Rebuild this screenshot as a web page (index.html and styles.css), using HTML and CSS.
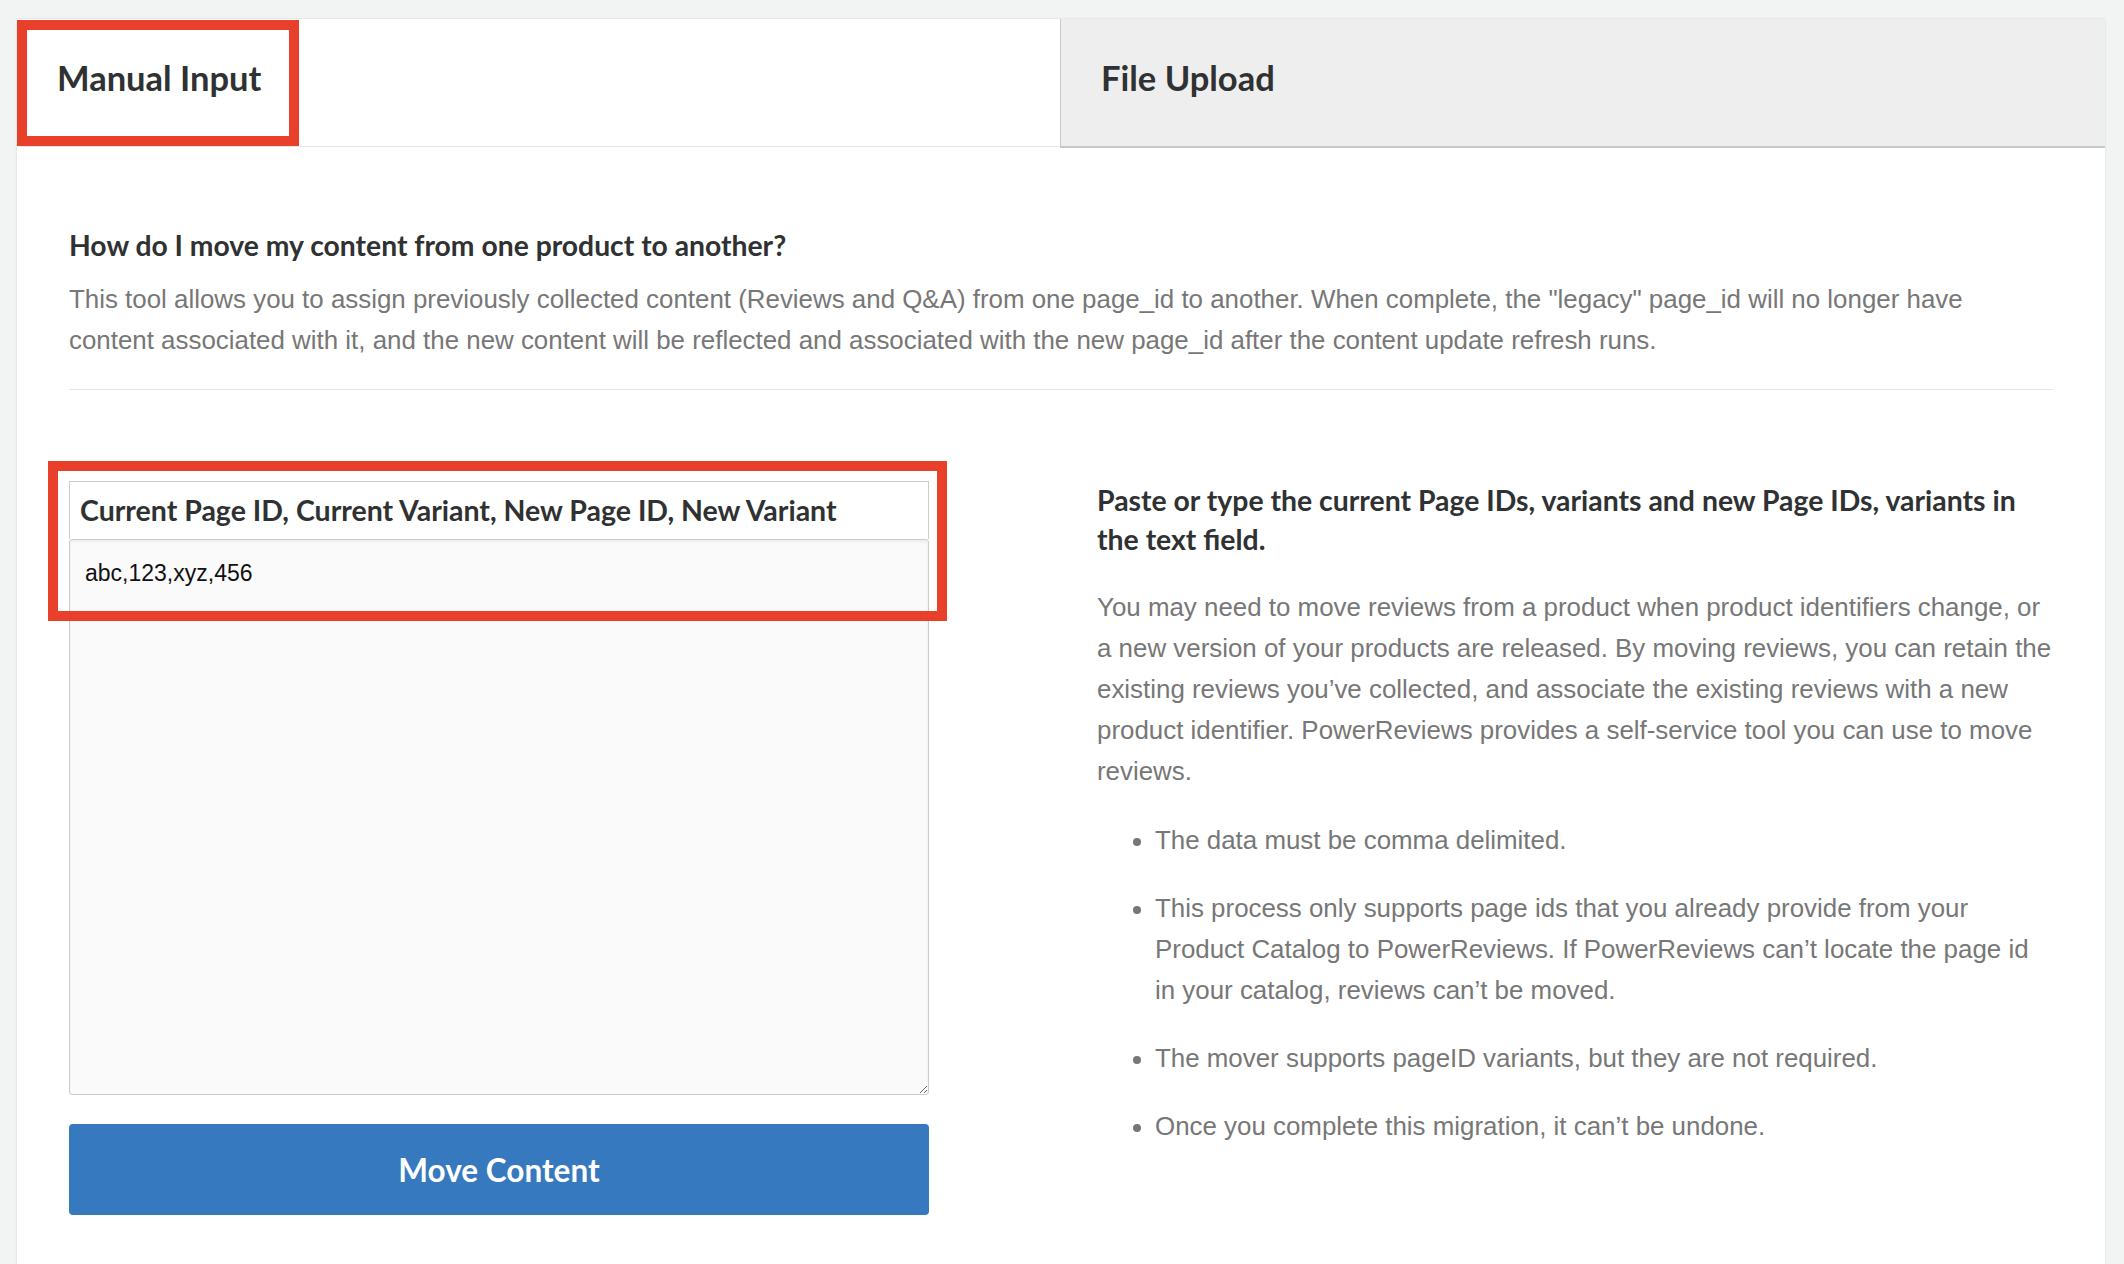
FILE: index.html
```html
<!DOCTYPE html>
<html lang="en">
<head>
<meta charset="utf-8">
<title>Move Content</title>
<link rel="stylesheet" href="styles.css">
</head>
<body>
<div class="page">
  <div class="card">
    <div class="tabs">
      <div class="tab tab-active">Manual Input</div>
      <div class="tab tab-inactive">File Upload</div>
    </div>
    <div class="content">
      <section class="intro">
        <h2 class="intro-title">How do I move my content from one product to another?</h2>
        <p class="text">This tool allows you to assign previously collected content (Reviews and Q&amp;A) from one page_id to another. When complete, the "legacy" page_id will no longer have content associated with it, and the new content will be reflected and associated with the new page_id after the content update refresh runs.</p>
      </section>
      <div class="columns">
        <div class="form-col">
          <div class="field-label">Current Page ID, Current Variant, New Page ID, New Variant</div>
          <textarea class="field-input" spellcheck="false">abc,123,xyz,456</textarea>
          <button class="btn-primary" type="button">Move Content</button>
        </div>
        <div class="help-col">
          <h3 class="help-title">Paste or type the current Page IDs, variants and new Page IDs, variants in the text field.</h3>
          <p class="text">You may need to move reviews from a product when product identifiers change, or a new version of your products are released. By moving reviews, you can retain the existing reviews you’ve collected, and associate the existing reviews with a new product identifier. PowerReviews provides a self-service tool you can use to move reviews.</p>
          <ul class="help-list">
            <li>The data must be comma delimited.</li>
            <li>This process only supports page ids that you already provide from your Product Catalog to PowerReviews. If PowerReviews can’t locate the page id in your catalog, reviews can’t be moved.</li>
            <li>The mover supports pageID variants, but they are not required.</li>
            <li>Once you complete this migration, it can’t be undone.</li>
          </ul>
        </div>
      </div>
    </div>
  </div>
</div>
<div class="mark mark-tab"></div>
<div class="mark mark-field"></div>
</body>
</html>
```

FILE: styles.css
```css
html, body {
  margin: 0;
  padding: 0;
}
body {
  background: #f2f3f3;
  font-family: "Liberation Sans", Arial, sans-serif;
  overflow: hidden;
  height: 1264px;
}
.page {
  padding: 19px 19px 0 17px;
}
.card {
  background: #ffffff;
  box-shadow: 0 0 2px rgba(0, 0, 0, 0.12);
  min-height: 1300px;
}
.tabs {
  display: flex;
  height: 128px;
}
.tab {
  box-sizing: border-box;
  font-family: Lato, "Open Sans", sans-serif;
  font-weight: 700;
  font-size: 34.5px;
  line-height: 40px;
  color: #2f3132;
  padding-top: 39px;
}
.tab-active {
  width: 1043px;
  padding-left: 40px;
  background: #ffffff;
  border-bottom: 1px solid #e6e6e6;
}
.tab-inactive {
  flex: 1;
  padding-left: 40px;
  background: #eeeeee;
  border-left: 1px solid #c8c8c8;
  border-bottom: 2px solid #c8c8c8;
  height: 129px;
}
.content {
  padding: 78px 52px 0 52px;
}
.intro {
  border-bottom: 1px solid #e6e6e6;
  padding-bottom: 28px;
}
.intro-title {
  margin: 0 0 14px 0;
  font-family: Lato, "Open Sans", sans-serif;
  font-weight: 700;
  font-size: 28.3px;
  line-height: 40px;
  color: #2f3132;
}
.text {
  margin: 0;
  font-size: 25.9px;
  line-height: 41px;
  color: #777777;
}
.columns {
  display: grid;
  grid-template-columns: 860px 956px;
  column-gap: 168px;
  padding-top: 91px;
}
.form-col {
  display: flex;
  flex-direction: column;
}
.field-label {
  box-sizing: border-box;
  height: 58px;
  border: 1px solid #cccccc;
  border-bottom: none;
  padding-left: 10px;
  font-family: Lato, "Open Sans", sans-serif;
  font-weight: 700;
  font-size: 28.5px;
  line-height: 56px;
  color: #2f3132;
  white-space: nowrap;
}
.field-input {
  box-sizing: border-box;
  display: block;
  width: 860px;
  height: 556px;
  margin: 0;
  padding: 20px 15px;
  border: 1px solid #cccccc;
  border-radius: 3px;
  background: #fafafa;
  box-shadow: inset 0 2px 3px rgba(0, 0, 0, 0.06);
  font-family: "Liberation Sans", Arial, sans-serif;
  font-size: 23px;
  color: #111111;
  resize: vertical;
  outline: none;
}
.btn-primary {
  margin-top: 29px;
  height: 91px;
  width: 860px;
  border: none;
  border-radius: 4px;
  background: #3679be;
  color: #ffffff;
  font-family: Lato, "Open Sans", sans-serif;
  font-weight: 700;
  font-size: 31.5px;
  cursor: pointer;
}
.help-title {
  margin: 0 0 28px 0;
  font-family: Lato, "Open Sans", sans-serif;
  font-weight: 700;
  font-size: 28.4px;
  line-height: 39px;
  color: #2f3132;
}
.help-list {
  margin: 28px 0 0 0;
  padding-left: 58px;
  font-size: 25.9px;
  line-height: 41px;
  color: #777777;
}
.help-list li {
  margin-bottom: 27px;
}
.mark {
  position: absolute;
  box-sizing: border-box;
  border: 10px solid #e8402a;
  pointer-events: none;
}
.mark-tab {
  left: 17px;
  top: 20px;
  width: 282px;
  height: 126px;
}
.mark-field {
  left: 48px;
  top: 461px;
  width: 899px;
  height: 160px;
}
```
